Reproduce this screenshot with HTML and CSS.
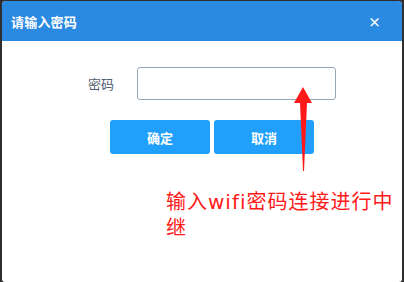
FILE: index.html
```html
<!DOCTYPE html>
<html>
<head>
<meta charset="utf-8">
<link rel="stylesheet" href="styles.css">
</head>
<body>
<div class="dialog">
  <div class="header">
    <span class="title">请输入密码</span>
    <span class="close">×</span>
  </div>
  <div class="content">
    <div class="row">
      <label class="label">密码</label>
      <input class="input" type="password">
    </div>
    <div class="buttons">
      <button class="btn">确定</button>
      <button class="btn">取消</button>
    </div>
    <div class="note">输入wifi密码连接进行中继</div>
  </div>
  <svg class="arrow" width="24" height="90" viewBox="0 0 24 90">
    <path d="M11 0 L20 16 L15 16 L12 84 L11 84 L8 16 L2 16 Z" fill="#ff1a1a"/>
  </svg>
</div>
</body>
</html>
```
FILE: styles.css
```css
html, body {
  margin: 0;
  padding: 0;
}
body {
  background: #2e2e2e;
  width: 404px;
  height: 282px;
  overflow: hidden;
  font-family: "Noto Sans CJK SC", "Microsoft YaHei", sans-serif;
}
.dialog {
  position: relative;
  margin: 1px 2px 0 2px;
  width: 400px;
  height: 281px;
  background: #fff;
  border-radius: 4px 4px 3px 3px;
  overflow: hidden;
}
.header {
  height: 40px;
  background: #2a89e0;
  display: flex;
  align-items: center;
  justify-content: space-between;
  padding: 0 21px 0 9px;
  color: #fff;
}
.title {
  font-size: 13px;
  font-weight: bold;
  letter-spacing: 0.2px;
}
.close {
  font-size: 13px;
  font-weight: bold;
  line-height: 1;
}
.content {
  padding-top: 26px;
}
.row {
  display: flex;
  align-items: center;
}
.label {
  width: 112px;
  text-align: right;
  font-size: 13px;
  color: #4f5d6e;
}
.input {
  margin: 0 0 0 23px;
  width: 199px;
  height: 33px;
  box-sizing: border-box;
  border: 1px solid #98a6b6;
  border-radius: 3px;
  outline: none;
  padding: 0 6px;
}
.buttons {
  display: flex;
  gap: 4px;
  margin: 20px 0 0 108px;
}
.btn {
  width: 100px;
  height: 34px;
  border: none;
  border-radius: 3px;
  background: #21a0fb;
  color: #fff;
  font-family: "Noto Sans CJK SC", sans-serif;
  font-size: 13px;
  font-weight: bold;
  padding: 0;
}
.note {
  margin: 35px 0 0 164px;
  width: 228px;
  font-family: "DejaVu Sans", "Noto Sans CJK SC", sans-serif;
  font-size: 20px;
  letter-spacing: 1px;
  line-height: 26px;
  color: #ff1a1a;
}
.arrow {
  position: absolute;
  left: 290px;
  top: 86px;
}
```
